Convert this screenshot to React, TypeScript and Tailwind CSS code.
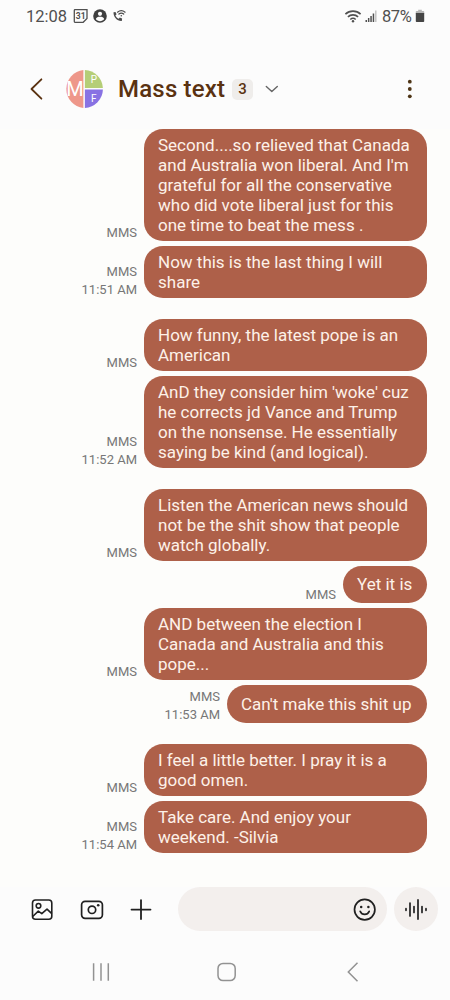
type Message = {
  lines: string[];
  time?: string;
  frame: string;
  gap: string;
};

const messages: Message[] = [
  {
    lines: [
      "Second....so relieved that Canada",
      "and Australia won liberal. And I'm",
      "grateful for all the conservative",
      "who did vote liberal just for this",
      "one time to beat the mess .",
    ],
    frame: "h-[112px] w-[283px]",
    gap: "",
  },
  { lines: ["Now this is the last thing I will", "share"], time: "11:51 AM", frame: "h-[52px] w-[283px]", gap: "mt-[5px]" },
  { lines: ["How funny, the latest pope is an", "American"], frame: "h-[52px] w-[283px]", gap: "mt-[21px]" },
  {
    lines: [
      "AnD they consider him 'woke' cuz",
      "he corrects jd Vance and Trump",
      "on the nonsense. He essentially",
      "saying be kind (and logical).",
    ],
    time: "11:52 AM",
    frame: "h-[92px] w-[283px]",
    gap: "mt-[5px]",
  },
  {
    lines: ["Listen the American news should", "not be the shit show that people", "watch globally."],
    frame: "h-[72px] w-[283px]",
    gap: "mt-[21px]",
  },
  { lines: ["Yet it is"], frame: "h-[37px] w-[84px]", gap: "mt-[5px]" },
  {
    lines: ["AND between the election I", "Canada and Australia and this", "pope..."],
    frame: "h-[72px] w-[283px]",
    gap: "mt-[5px]",
  },
  { lines: ["Can't make this shit up"], time: "11:53 AM", frame: "h-[38px] w-[200px]", gap: "mt-[5px]" },
  { lines: ["I feel a little better. I pray it is a", "good omen."], frame: "h-[52px] w-[283px]", gap: "mt-[21px]" },
  { lines: ["Take care. And enjoy your", "weekend. -Silvia"], time: "11:54 AM", frame: "h-[52px] w-[283px]", gap: "mt-[5px]" },
];

function StatusBar() {
  return (
    <div className="flex h-8 shrink-0 items-center pl-[26px] pr-[25px] text-[#505050]">
      <span className="w-[47px] pt-px text-[16.5px] leading-8 whitespace-nowrap">12:08</span>
      <svg className="h-4 w-4 shrink-0" viewBox="0 0 16 16" fill="none" stroke="currentColor">
        <path d="M2 1.700h12v8.800l-3.800 3.800H2a.7.7 0 0 1-.7-.7V2.400A.7.7 0 0 1 2 1.700Z" strokeWidth="1.300" />
        <text x="7.700" y="11" textAnchor="middle" fontSize="8.500" fontWeight="700" fill="currentColor" stroke="none">31</text>
      </svg>
      <svg className="ml-[3px] h-4 w-4 shrink-0" viewBox="0 0 16 16">
        <circle cx="8" cy="8" r="6.800" fill="#3f3f3f" />
        <circle cx="8" cy="5.800" r="2.100" fill="#fcfcfc" />
        <path d="M3.800 11c.5-1.700 2.200-2.300 4.200-2.300s3.700.6 4.200 2.300c-1 1.400-2.400 2.200-4.200 2.200S4.800 12.400 3.800 11Z" fill="#fcfcfc" />
      </svg>
      <svg className="ml-[4px] h-4 w-4 shrink-0" viewBox="0 0 16 16" fill="none" stroke="#4b4b4b" strokeLinecap="round">
        <path d="M1.500 4.300 3.500 3.900l1.100 2.400-1.200 1.200c.7 1.500 1.800 2.500 3.300 3.300l1.100-1.200 2.300 1-.3 2.400c-4.600.4-8.500-4.100-8.300-8.700Z" fill="#4b4b4b" stroke="none" />
        <path d="M5.500 4.200a6 6 0 0 1 7.600 0M6.900 6a3.800 3.800 0 0 1 4.800 0" strokeWidth="1.200" />
        <circle cx="9.300" cy="7.800" r=".8" fill="#4b4b4b" stroke="none" />
      </svg>
      <div className="flex-1" />
      <svg className="h-4 w-[18px] shrink-0" viewBox="0 0 18 16" fill="none" stroke="currentColor" strokeWidth="1.600">
        <path d="M1.400 6.200a11 11 0 0 1 15.200 0M3.900 8.900a7.500 7.500 0 0 1 10.200 0M6.300 11.500a4 4 0 0 1 5.400 0" />
        <circle cx="9" cy="13.300" r="1.200" fill="currentColor" stroke="none" />
      </svg>
      <svg className="ml-[3px] h-4 w-3 shrink-0" viewBox="0 0 12 16" fill="currentColor">
        <path d="M.5 12h1.500v2H.5zM2.900 10h1.500v4H2.900zM5.300 8h1.500v6H5.300zM7.700 5.600h1.500V14H7.700z" />
        <path d="M10.100 2.500h1.400V14h-1.400z" opacity=".35" />
      </svg>
      <span className="ml-[5px] w-[33px] pt-px text-[16.5px] leading-8 tracking-[-0.4px] whitespace-nowrap">87%</span>
      <svg className="h-4 w-[10px] shrink-0" viewBox="0 0 10 16">
        <path d="M3.200 1.800h3.600v1.300h1.700q.7 0 .7.7v2H.8v-2q0-.7.7-.7h1.700Z" fill="#b5b5b5" />
        <path d="M.8 5h8.400v8.300q0 .8-.8.8H1.600q-.8 0-.8-.8Z" fill="#454545" />
      </svg>
    </div>
  );
}

function Avatar() {
  return (
    <svg className="h-10 w-10 shrink-0" viewBox="0 0 40 40" textAnchor="middle" fill="#fff">
      <path d="M19.400 1.100v37.800A19 19 0 0 1 19.400 1.100Z" fill="#ee978a" />
      <path d="M20.900 1a19 19 0 0 1 18 18H20.900Z" fill="#b5ce77" />
      <path d="M20.900 20.600h18A19 19 0 0 1 20.900 39Z" fill="#8872e3" />
      <text x="10.900" y="26.700" fontSize="20">M</text>
      <text x="29.800" y="14" fontSize="10">P</text>
      <text x="29.800" y="32.800" fontSize="10">F</text>
    </svg>
  );
}

function Header() {
  return (
    <header className="flex h-[97px] shrink-0 items-center pt-[17px] pl-[29px] pr-[35px] text-[#5a3211]">
      <svg className="h-6 w-4 shrink-0" viewBox="0 0 16 24" fill="none" stroke="currentColor" strokeWidth="1.800" strokeLinecap="round" strokeLinejoin="round">
        <path d="M12.400 2.300 2.500 12l9.900 9.700" />
      </svg>
      <div className="ml-[19px] flex">
        <Avatar />
      </div>
      <h1 className="ml-[14px] w-[114px] text-[24px] leading-8 font-medium tracking-[0.2px] whitespace-nowrap">Mass text</h1>
      <span className="flex h-[21px] w-[21px] items-center justify-center rounded-[5px] bg-[#efedeb] text-[15px] font-medium">3</span>
      <svg className="ml-[11px] h-4 w-4 shrink-0" viewBox="0 0 16 16" fill="none" stroke="#656565" strokeWidth="1.400" strokeLinecap="round" strokeLinejoin="round">
        <path d="m2.300 5.500 5.500 5.100 5.500-5.100" />
      </svg>
      <div className="flex-1" />
      <svg className="h-6 w-[10px] shrink-0" viewBox="0 0 10 24" fill="#4e3516">
        <circle cx="4.800" cy="4.700" r="1.900" />
        <circle cx="4.800" cy="12" r="1.900" />
        <circle cx="4.800" cy="19.300" r="1.900" />
      </svg>
    </header>
  );
}

function Bubble({ lines, time, frame, gap }: Message) {
  return (
    <div className={`flex items-stretch justify-end ${gap}`}>
      <div className="mr-[7px] flex flex-col items-end justify-end text-[13px] leading-[18px] text-[#777777]">
        <span className="-mb-px">MMS</span>
        {time && <span className="-mb-px pt-px">{time}</span>}
      </div>
      <div className={`flex flex-col justify-center rounded-[19px] bg-[#ae6049] pb-px pl-[14px] text-[17px] leading-5 whitespace-nowrap text-[#fdf1e8] ${frame}`}>
        {lines.map((line) => (
          <p key={line}>{line}</p>
        ))}
      </div>
    </div>
  );
}

function Composer() {
  return (
    <div className="flex h-[44px] shrink-0 items-center pl-[30px] pr-3 text-[#202020]">
      <svg className="h-6 w-6 shrink-0" viewBox="0 0 24 24" fill="none" stroke="currentColor" strokeWidth="1.600" strokeLinejoin="round">
        <rect x="2.500" y="3" width="19.300" height="19.300" rx="3" />
        <circle cx="8.500" cy="8.800" r="2.300" />
        <path d="m2.700 19.500 5.600-5.300 3.500 2.500 5.200-4.600 4.800 4.600" />
      </svg>
      <svg className="ml-[26px] h-6 w-6 shrink-0" viewBox="0 0 24 24" fill="none" stroke="currentColor" strokeWidth="1.700">
        <rect x="1.600" y="4.300" width="20.800" height="17" rx="3.500" />
        <circle cx="12" cy="12.800" r="3.700" />
        <circle cx="18.200" cy="8.200" r="1.300" fill="currentColor" stroke="none" />
      </svg>
      <svg className="ml-[25px] h-6 w-6 shrink-0" viewBox="0 0 24 24" stroke="currentColor" strokeWidth="1.800" strokeLinecap="round">
        <path d="M12 3.100v19M2.500 12.600h19" />
      </svg>
      <div className="ml-[25px] flex h-[44px] w-[209px] items-center justify-end rounded-full bg-[#f3efed] pr-[10px]">
        <svg className="h-6 w-6" viewBox="0 0 24 24" fill="none" stroke="currentColor" strokeWidth="1.700" strokeLinecap="round">
          <circle cx="11.700" cy="12.600" r="10.200" />
          <path d="M7.200 14.300c1.800 4 7.200 4 9 0" />
          <circle cx="8.200" cy="10" r="1.250" fill="currentColor" stroke="none" />
          <circle cx="15.400" cy="10" r="1.250" fill="currentColor" stroke="none" />
        </svg>
      </div>
      <div className="ml-[7px] flex h-[44px] w-[44px] items-center justify-center rounded-full bg-[#f3efed]">
        <svg className="h-6 w-6" viewBox="0 0 24 24" stroke="currentColor" strokeWidth="1.700" strokeLinecap="round">
          <path d="M2 11.700v1.600M6 6.100v12.800M10 9.500v6M14 2.900v19.200M18 9.500v6M22 11.700v1.600" />
        </svg>
      </div>
    </div>
  );
}

function NavigationBar() {
  return (
    <nav className="flex h-[69px] shrink-0 items-center pt-[12px] pl-[90px] text-[#929292]">
      <svg className="h-6 w-6" viewBox="0 0 24 24" stroke="currentColor" strokeWidth="1.500">
        <path d="M3.600 3.200v17.600M11 3.200v17.600M18.300 3.200v17.600" />
      </svg>
      <svg className="ml-[101px] h-6 w-6" viewBox="0 0 24 24" fill="none" stroke="currentColor" strokeWidth="1.500">
        <rect x="3" y="3.400" width="17.200" height="17.200" rx="5" />
      </svg>
      <svg className="ml-[102px] h-6 w-6" viewBox="0 0 24 24" fill="none" stroke="currentColor" strokeWidth="1.500">
        <path d="M16.500 2.800 7.300 12l9.200 9.200" />
      </svg>
    </nav>
  );
}

export default function App() {
  return (
    <div className="flex h-[1000px] w-[450px] flex-col overflow-hidden bg-[#fcfcfc] font-['Roboto',sans-serif]">
      <StatusBar />
      <Header />
      <main className="h-[758px] shrink-0 bg-[#fdfdfb] pr-[23px]">
        {messages.map((message) => (
          <Bubble key={message.lines[0]} {...message} />
        ))}
      </main>
      <Composer />
      <NavigationBar />
    </div>
  );
}
